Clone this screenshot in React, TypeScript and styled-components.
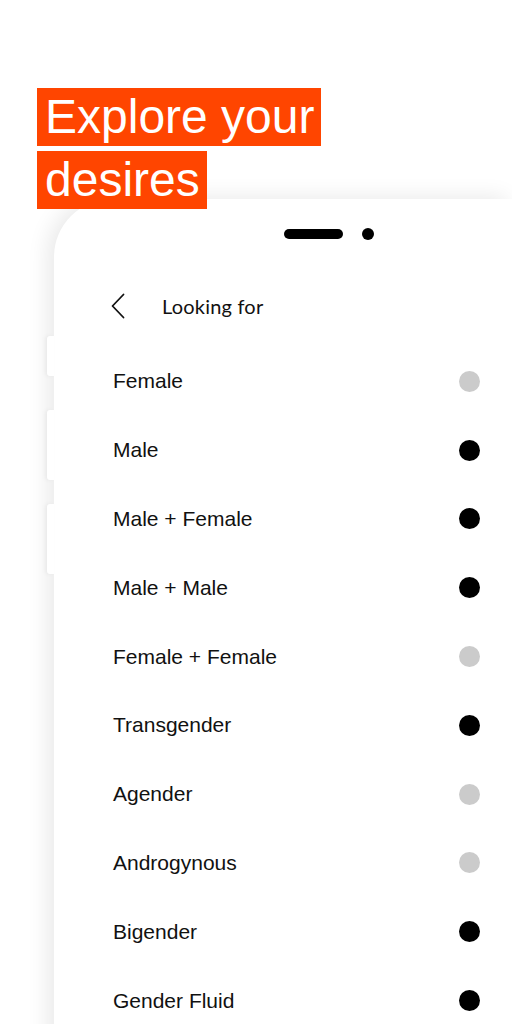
import React from 'react';
import styled, { createGlobalStyle } from 'styled-components';

const GlobalStyle = createGlobalStyle`
  html, body {
    margin: 0;
    padding: 0;
    background: #fff;
    overflow: hidden;
  }
  body {
    width: 512px;
    height: 1024px;
    font-family: 'Liberation Sans', Arial, sans-serif;
  }
`;

const Page = styled.div`
  width: 512px;
  height: 1024px;
  overflow: hidden;
  padding-top: 88px;
  box-sizing: border-box;
`;

const Headline = styled.h1`
  position: relative;
  z-index: 2;
  margin: 0 0 0 37px;
  display: flex;
  flex-direction: column;
  align-items: flex-start;
  gap: 5px;
  font-family: 'Liberation Sans', Arial, sans-serif;
  font-weight: 400;
  font-size: 48px;
`;

const HeadlineLine = styled.span`
  display: inline-block;
  background: #ff4500;
  color: #fff;
  padding: 0 7px 0 8px;
  line-height: 58px;
  height: 58px;
`;

const Phone = styled.div`
  position: relative;
  z-index: 1;
  margin: -10px 0 0 54px;
  width: 458px;
  height: 900px;
  background: #fff;
  border-top-left-radius: 58px;
  box-shadow: -6px -2px 22px rgba(0, 0, 0, 0.09);
  padding-top: 29px;
  box-sizing: border-box;
`;

const SideButton = styled.div<{ $top: number; $h: number }>`
  position: absolute;
  left: -7px;
  top: ${(p) => p.$top}px;
  width: 7px;
  height: ${(p) => p.$h}px;
  background: #fff;
  border-radius: 3px 0 0 3px;
  box-shadow: -2px 0 4px rgba(0, 0, 0, 0.05);
`;

const Notch = styled.div`
  display: flex;
  align-items: center;
  height: 12px;
  padding-left: 230px;
  gap: 19px;
`;

const Speaker = styled.div`
  width: 59px;
  height: 10px;
  border-radius: 5px;
  background: #000;
`;

const Camera = styled.div`
  width: 12px;
  height: 12px;
  border-radius: 50%;
  background: #000;
`;

const Header = styled.div`
  display: flex;
  align-items: center;
  height: 56px;
  margin-top: 38px;
  padding-left: 57px;
`;

const BackButton = styled.button`
  border: 0;
  background: none;
  padding: 0;
  width: 14px;
  height: 26px;
  display: flex;
  align-items: center;
  margin-right: 37px;
  cursor: pointer;
`;

const Title = styled.span`
  font-family: Lato, 'Open Sans', sans-serif;
  font-size: 20px;
  color: #111;
  letter-spacing: 0.2px;
`;

const List = styled.ul`
  list-style: none;
  margin: 13px 0 0;
  padding: 0 32px 0 59px;
`;

const Row = styled.li`
  display: flex;
  align-items: center;
  justify-content: space-between;
  height: 68.8px;
  font-size: 21px;
  color: #111;
`;

const Dot = styled.span<{ $on: boolean }>`
  width: 21px;
  height: 21px;
  border-radius: 50%;
  background: ${(p) => (p.$on ? '#000' : '#cbcbcb')};
`;

const options: [string, boolean][] = [
  ['Female', false],
  ['Male', true],
  ['Male + Female', true],
  ['Male + Male', true],
  ['Female + Female', false],
  ['Transgender', true],
  ['Agender', false],
  ['Androgynous', false],
  ['Bigender', true],
  ['Gender Fluid', true],
];

export default function App() {
  return (
    <Page>
      <GlobalStyle />
      <Headline>
        <HeadlineLine>Explore your</HeadlineLine>
        <HeadlineLine>desires</HeadlineLine>
      </Headline>
      <Phone>
        <SideButton $top={137} $h={40} />
        <SideButton $top={211} $h={70} />
        <SideButton $top={305} $h={70} />
        <Notch>
          <Speaker />
          <Camera />
        </Notch>
        <Header>
          <BackButton aria-label="Back">
            <svg width="14" height="26" viewBox="0 0 14 26">
              <polyline points="12.5,1.5 1.5,13 12.5,24.5" fill="none" stroke="#111" strokeWidth="1.8" strokeLinecap="round" strokeLinejoin="round" />
            </svg>
          </BackButton>
          <Title>Looking for</Title>
        </Header>
        <List>
          {options.map(([label, on]) => (
            <Row key={label}>
              {label}
              <Dot $on={on} />
            </Row>
          ))}
        </List>
      </Phone>
    </Page>
  );
}
